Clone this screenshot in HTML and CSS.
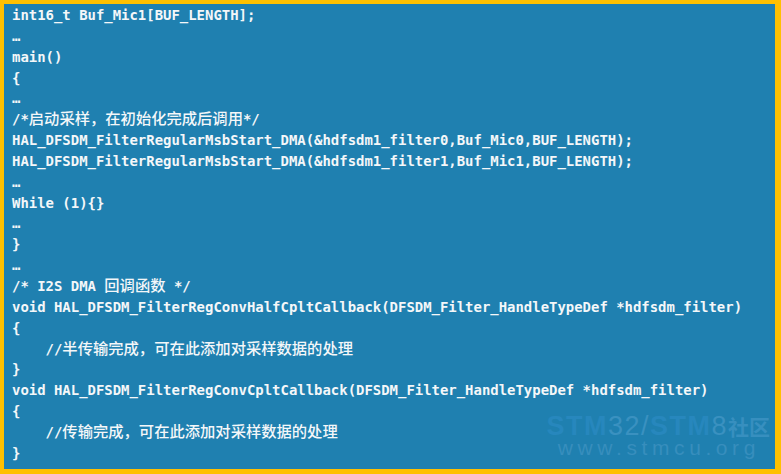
FILE: index.html
```html
<!DOCTYPE html>
<html>
<head>
<meta charset="utf-8">
<link rel="stylesheet" href="styles.css">
</head>
<body>
<div class="frame">
<div class="panel">
<pre class="code">int16_t Buf_Mic1[BUF_LENGTH];
…
main()
{
…
/*<span class="cjk">启动采样，在初始化完成后调用</span>*/
HAL_DFSDM_FilterRegularMsbStart_DMA(&amp;hdfsdm1_filter0,Buf_Mic0,BUF_LENGTH);
HAL_DFSDM_FilterRegularMsbStart_DMA(&amp;hdfsdm1_filter1,Buf_Mic1,BUF_LENGTH);
…
While (1){}
…
}
…
/* I2S DMA <span class="cjk">回调函数</span> */
void HAL_DFSDM_FilterRegConvHalfCpltCallback(DFSDM_Filter_HandleTypeDef *hdfsdm_filter)
{
    //<span class="cjk">半传输完成，可在此添加对采样数据的处理</span>
}
void HAL_DFSDM_FilterRegConvCpltCallback(DFSDM_Filter_HandleTypeDef *hdfsdm_filter)
{
    //<span class="cjk">传输完成，可在此添加对采样数据的处理</span>
}</pre>
<div class="watermark">
<div class="wm-top"><span class="wm-bold">STM</span>32/<span class="wm-bold">STM</span>8<span class="wm-cjk">社区</span></div>
<div class="wm-url">www.stmcu.org</div>
</div>
</div>
</div>
</body>
</html>
```
FILE: styles.css
```css
html, body {
  margin: 0;
  padding: 0;
  background: #ffc000;
}
.frame {
  width: 781px;
  height: 474px;
  box-sizing: border-box;
  background: #ffc000;
  padding: 4px 6px 5px 4px;
}
.panel {
  position: relative;
  width: 100%;
  height: 100%;
  background: #1f80b0;
  overflow: hidden;
}
.code {
  margin: 0;
  padding: 1px 0 0 8px;
  font-family: "DejaVu Sans Mono", "Liberation Mono", monospace;
  font-weight: bold;
  font-size: 13.95px;
  line-height: 20.85px;
  color: #f4f7f9;
  white-space: pre;
}
.cjk {
  font-family: "Noto Sans CJK SC", sans-serif;
  font-weight: 500;
  font-size: 15.3px;
  line-height: 1;
}
.watermark {
  position: absolute;
  right: 5px;
  bottom: 12px;
  display: flex;
  flex-direction: column;
  align-items: flex-end;
  font-family: "Liberation Sans", Arial, sans-serif;
  pointer-events: none;
}
.wm-top {
  font-size: 27px;
  line-height: 22px;
  letter-spacing: 1.5px;
  color: #3a91c0;
  white-space: nowrap;
}
.wm-bold {
  font-weight: bold;
  color: #2787bd;
}
.wm-cjk {
  font-family: "Noto Sans CJK SC", sans-serif;
  font-weight: bold;
  font-size: 21px;
  letter-spacing: 0;
  color: #378fbf;
}
.wm-url {
  font-size: 21px;
  line-height: 18px;
  letter-spacing: 4.6px;
  color: #378ebd;
  margin-right: 10px;
  margin-top: 2px;
}
```
